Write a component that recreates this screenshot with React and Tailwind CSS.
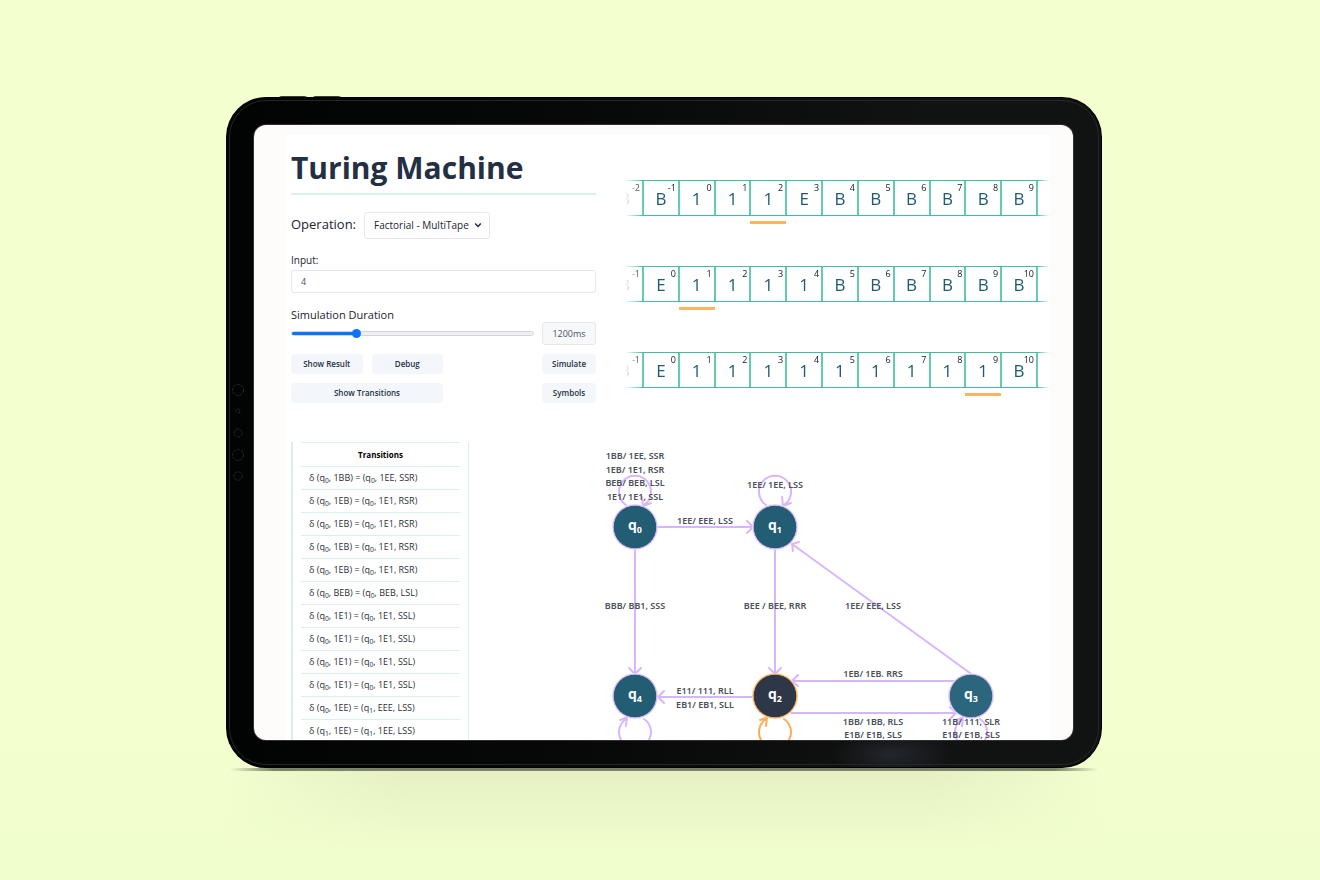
import React, { useState } from "react";

const TAPES = [
  { start: -2, cells: "B111EBBBBBB", head: 3 },
  { start: -1, cells: "E1111BBBBBB", head: 1 },
  { start: -1, cells: "E111111111B", head: 9 },
];

const TRANSITIONS = [
  ["0", "1BB", "0", "1EE, SSR"],
  ["0", "1EB", "0", "1E1, RSR"],
  ["0", "1EB", "0", "1E1, RSR"],
  ["0", "1EB", "0", "1E1, RSR"],
  ["0", "1EB", "0", "1E1, RSR"],
  ["0", "BEB", "0", "BEB, LSL"],
  ["0", "1E1", "0", "1E1, SSL"],
  ["0", "1E1", "0", "1E1, SSL"],
  ["0", "1E1", "0", "1E1, SSL"],
  ["0", "1E1", "0", "1E1, SSL"],
  ["0", "1EE", "1", "EEE, LSS"],
  ["1", "1EE", "1", "1EE, LSS"],
];

const NODES = [
  { id: 0, x: 45, y: 85, loop: "top" },
  { id: 1, x: 185, y: 85, loop: "top" },
  { id: 4, x: 45, y: 254, loop: "bottom" },
  { id: 2, x: 185, y: 254, loop: "bottom", active: true },
  { id: 3, x: 381, y: 254, loop: "bottom" },
];

const EDGES = [
  "M67 85H162M157 79L163 85L157 91",
  "M45 107V232M39 226L45 232L51 226",
  "M185 107V232M179 226L185 232L191 226",
  "M162 255H68M74 249L68 255L74 261",
  "M380 231L202 102M209 100L202 102L203 109",
  "M366 239H202M208 233L202 239L208 244",
  "M201 271H366M360 265L366 271L360 277",
];

const LABELS = [
  [45, 17, "1BB/ 1EE, SSR"],
  [45, 31, "1EB/ 1E1, RSR"],
  [45, 44, "BEB/ BEB, LSL"],
  [45, 58, "1E1/ 1E1, SSL"],
  [185, 46, "1EE/ 1EE, LSS"],
  [115, 82, "1EE/ EEE, LSS"],
  [45, 167, "BBB/ BB1, SSS"],
  [185, 167, "BEE / BEE, RRR"],
  [283, 167, "1EE/ EEE, LSS"],
  [283, 235, "1EB/ 1EB. RRS"],
  [115, 252, "E11/ 111, RLL"],
  [115, 266, "EB1/ EB1, SLL"],
  [283, 283, "1BB/ 1BB, RLS"],
  [283, 296, "E1B/ E1B, SLS"],
  [381, 283, "11B/ 111, SLR"],
  [381, 296, "E1B/ E1B, SLS"],
];

function Tape({ start, cells, head }) {
  return (
    <div className="h-11">
      <div className="flex h-9 border-y border-[#3fbf9f] text-[17px] font-medium text-[#1f5a73] [mask-image:linear-gradient(to_right,transparent_7px,black_25px,black_calc(100%-13px),transparent)]">
        <div className="relative flex w-6 items-center pt-0.5 pl-px">
          B
          <span className="absolute top-px right-0.5 text-[9px] leading-3 font-normal text-black">
            {start}
          </span>
        </div>
        {cells.split("").map((symbol, i) => (
          <div
            key={i}
            className="relative flex flex-1 items-center justify-center border-l-2 border-[#62cbb0] pt-0.5"
          >
            {symbol}
            <span className="absolute top-px right-0.5 text-[9px] leading-3 text-gray-900">
              {start + 1 + i}
            </span>
          </div>
        ))}
        <div className="w-[14px] border-l-2 border-[#62cbb0]" />
      </div>
      <div className="flex pt-[5px] pr-[13px] pl-[25px]">
        {cells.split("").map((_, i) => (
          <div key={i} className={i === head ? "h-[3px] flex-1 bg-[#fdb462]" : "h-[3px] flex-1"} />
        ))}
      </div>
    </div>
  );
}

function Action({ className = "", children }) {
  return (
    <button
      type="button"
      className={`h-5 rounded-sm bg-[#f3f7fb] text-[8px] font-semibold text-[#25323f] ${className}`}
    >
      {children}
    </button>
  );
}

function Controls() {
  const [duration, setDuration] = useState(1200);
  const [input, setInput] = useState("4");
  const [operation, setOperation] = useState("Factorial - MultiTape");
  const fill = ((duration - 500) / 2700) * 100;
  return (
    <div className="pt-[14px]">
      <h1 className="border-b-2 border-[#d8f2ea] pb-1.5 text-[30px] leading-[38px] font-bold text-[#232f43]">
        Turing Machine
      </h1>
      <div className="flex items-center gap-2 pt-[17px]">
        <label htmlFor="operation" className="pb-1 text-[13px] leading-5 font-medium text-[#1a2433]">
          Operation:
        </label>
        <div className="relative">
          <select
            id="operation"
            value={operation}
            onChange={(e) => setOperation(e.target.value)}
            className="block h-[27px] w-[126px] appearance-none rounded-[3px] border border-gray-200 bg-white pl-[9px] text-[10px] font-medium text-[#1a2433]"
          >
            <option>Factorial - MultiTape</option>
          </select>
          <svg
            viewBox="0 0 8 8"
            className="pointer-events-none absolute top-[9px] right-2 size-2 fill-none stroke-[#1a2433]"
            strokeWidth="1.4"
          >
            <path d="M1.2 2.6L4 5.4L6.8 2.6" />
          </svg>
        </div>
      </div>
      <label
        htmlFor="input"
        className="mt-3 block pb-px text-[10px] leading-[18px] font-medium text-[#1a2433]"
      >
        Input:
      </label>
      <input
        id="input"
        value={input}
        onChange={(e) => setInput(e.target.value)}
        className="block h-[23px] w-full rounded-[3px] border border-gray-200 bg-white px-[9px] text-[9px] text-gray-600"
      />
      <div className="flex items-end gap-2 pt-[14px]">
        <div className="flex-1">
          <label htmlFor="duration" className="block text-[11px] leading-4 font-medium text-[#1a2433]">
            Simulation Duration
          </label>
          <div className="flex h-[22px] items-start pt-2">
            <input
              id="duration"
              type="range"
              min="500"
              max="3200"
              step="100"
              value={duration}
              onChange={(e) => setDuration(Number(e.target.value))}
              style={{
                backgroundImage: `linear-gradient(to right, #0b74fb ${fill}%, #efefef ${fill}%)`,
              }}
              className="h-[5px] w-full appearance-none rounded-full border border-gray-300 [&::-webkit-slider-thumb]:size-[9px] [&::-webkit-slider-thumb]:appearance-none [&::-webkit-slider-thumb]:rounded-full [&::-webkit-slider-thumb]:bg-[#0b74fb]"
            />
          </div>
        </div>
        <output
          htmlFor="duration"
          className="flex h-[23px] w-[54px] items-center justify-center rounded-[3px] border border-gray-200 bg-[#f7f8fa] text-[9px] text-gray-600"
        >
          {duration}ms
        </output>
      </div>
      <div className="flex justify-between pt-[9px]">
        <div className="grid w-[152px] grid-cols-2 gap-[9px]">
          <Action>Show Result</Action>
          <Action>Debug</Action>
          <Action className="col-span-2">Show Transitions</Action>
        </div>
        <div className="grid w-[54px] gap-[9px]">
          <Action>Simulate</Action>
          <Action>Symbols</Action>
        </div>
      </div>
    </div>
  );
}

function Transitions() {
  return (
    <div className="w-[178px] border-r border-l-2 border-[#d8f2ea] px-2">
      <table className="w-full border-collapse text-[9px] text-[#2b2f36]">
        <thead>
          <tr className="h-6 border-y border-[#d8f2ea]">
            <th className="p-0 text-[8px] font-bold text-black">Transitions</th>
          </tr>
        </thead>
        <tbody className="leading-4">
          {TRANSITIONS.map(([from, read, to, write], i) => (
            <tr key={i} className="h-[23px] border-b border-[#d8f2ea]">
              <td className="py-0 pl-2">
                δ (q<sub>{from}</sub>, {read}) = (q<sub>{to}</sub>, {write})
              </td>
            </tr>
          ))}
        </tbody>
      </table>
    </div>
  );
}

function StateDiagram() {
  return (
    <svg viewBox="0 0 460 320" className="w-[460px] shrink-0" role="img" aria-label="State diagram">
      <g fill="none" stroke="#d8b6fd" strokeWidth="2" strokeLinecap="round">
        {EDGES.map((d) => (
          <path key={d} d={d} />
        ))}
        {NODES.map(({ id, x, y, loop, active }) => (
          <path
            key={id}
            transform={`translate(${x} ${y})`}
            stroke={active ? "#fbad58" : "#d8b6fd"}
            d={
              loop === "top"
                ? "M-9 -22A16 16 0 1 1 9 -22M7 -30L8 -21L16 -24"
                : "M9 23A16 16 0 1 1 -9 23M-15 24L-8 21.500L-9 30"
            }
          />
        ))}
      </g>
      {NODES.map(({ id, x, y, active }) => (
        <g key={id}>
          <circle cx={x} cy={y} r="23" fill={active ? "#fcd9ae" : "#eee0ff"} />
          <circle
            cx={x}
            cy={y}
            r="21.800"
            fill={active ? "#2d3748" : id === 3 ? "#2c667c" : "#225d74"}
            stroke={active ? "#fbad58" : "#d8b6fd"}
            strokeWidth="1"
          />
          <text x={x} y={y + 3} textAnchor="middle" fill="#fff" fontSize="14" fontWeight="700">
            q
            <tspan dy="3" fontSize="9">
              {id}
            </tspan>
          </text>
        </g>
      ))}
      <g
        className="font-['Noto_Sans','Open_Sans',sans-serif]"
        fill="#4a5058"
        fontSize="9"
        fontWeight="600"
        textAnchor="middle"
      >
        {LABELS.map(([x, y, text]) => (
          <text key={`${x}-${y}`} x={x} y={y}>
            {text}
          </text>
        ))}
      </g>
    </svg>
  );
}

function Tablet({ children }) {
  return (
    <div className="relative w-full max-w-[876px]">
      <div className="absolute -top-px left-[52px] flex gap-1">
        <div className="h-1 w-[30px] rounded-t-sm bg-[#3b3f38]" />
        <div className="h-1 w-[30px] rounded-t-sm bg-[#3b3f38]" />
      </div>
      <div className="absolute inset-x-0 top-full h-20 bg-[linear-gradient(to_bottom,#e5efc2,transparent)] [mask-image:linear-gradient(to_right,transparent,black_20%,black_80%,transparent)]" />
      <div className="absolute inset-x-1 top-full h-[3px] bg-[linear-gradient(to_right,transparent,#7c8466_5%,#7c8466_95%,transparent)]" />
      <div className="relative rounded-[40px] bg-[radial-gradient(ellipse_60px_22px_at_76%_98%,#23262c,transparent),linear-gradient(to_right,#020303,#070808_40%,#111313_80%)] pt-7 pr-[29px] pb-7 pl-7 ring-1 ring-black ring-inset">
        <div className="pointer-events-none absolute inset-[3px] rounded-[37px] border border-[#232627]" />
        <svg
          viewBox="0 0 16 100"
          className="absolute top-[285px] left-1 h-[100px] w-4 fill-none stroke-[#262929]"
          strokeWidth="1"
          strokeDasharray="3 1"
        >
          <circle cx="8" cy="8" r="5.500" />
          <circle cx="8" cy="29" r="2" />
          <circle cx="8" cy="51" r="4" />
          <circle cx="8" cy="73" r="5.500" />
          <circle cx="8" cy="94" r="4.200" />
        </svg>
        <div className="relative aspect-[819/615] overflow-hidden rounded-[12px] bg-[#fefcfb] ring-1 ring-[#2e3030]">
          {children}
        </div>
      </div>
    </div>
  );
}

export default function App() {
  return (
    <main className="flex min-h-screen items-start justify-center overflow-hidden bg-[linear-gradient(to_bottom,#f3ffcf,#f3ffcf_80%,#f0fdcc)] pt-[97px] pl-2 font-['Open_Sans','Noto_Sans',sans-serif]">
      <Tablet>
        <div className="mt-[10px] mr-[23px] ml-8 min-h-full bg-white pl-[5px]">
          <div className="grid grid-cols-[305fr_432fr] gap-x-[22px]">
            <Controls />
            <div className="flex flex-col gap-[42px] pt-[45px]">
              {TAPES.map((tape, i) => (
                <Tape key={i} {...tape} />
              ))}
            </div>
          </div>
          <div className="flex items-start justify-between pt-[39px]">
            <Transitions />
            <StateDiagram />
          </div>
        </div>
      </Tablet>
    </main>
  );
}
